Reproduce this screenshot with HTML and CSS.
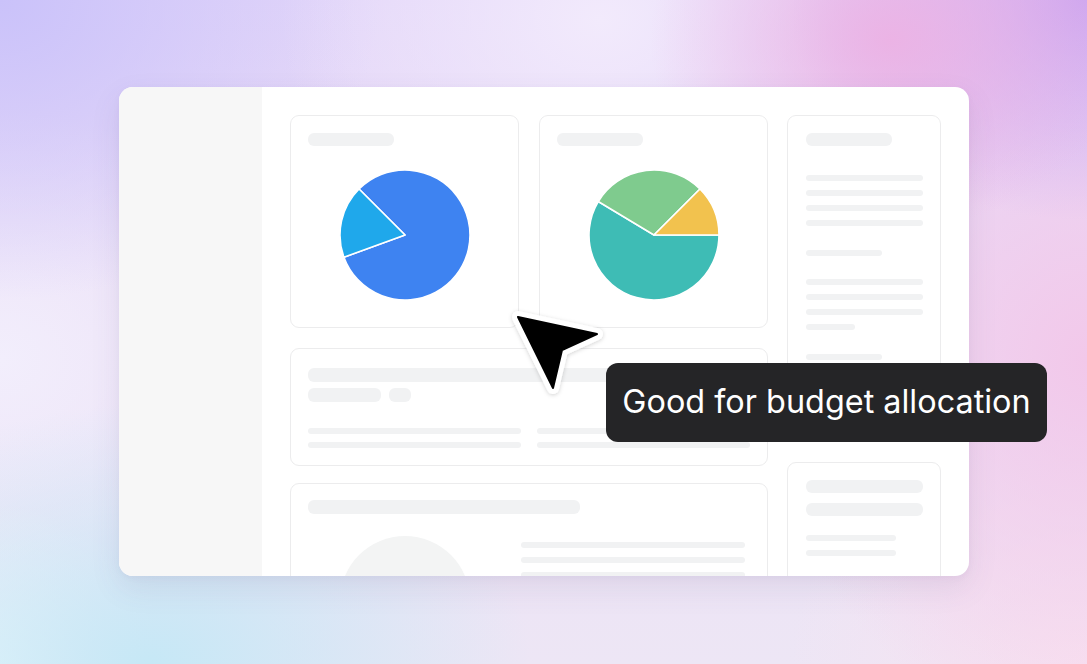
FILE: index.html
```html
<!DOCTYPE html>
<html lang="en">
<head>
<meta charset="utf-8">
<title>Pie chart</title>
<link rel="stylesheet" href="styles.css">
</head>
<body>
<div class="stage">
  <div class="window">
    <aside class="sidebar"></aside>
    <main class="main">
      <div class="left">
        <div class="row">
          <section class="card chart-card">
            <div class="bar title"></div>
            <svg class="pie" viewBox="-66 -66 132 132" width="132" height="132">
              <path d="M0,0 L-45.96,-45.96 A65,65 0 1 1 -61.08,22.23 Z" fill="#3e83f1" stroke="#fff" stroke-width="1.6" stroke-linejoin="round"/>
              <path d="M0,0 L-61.08,22.23 A65,65 0 0 1 -45.96,-45.96 Z" fill="#1fa8eb" stroke="#fff" stroke-width="1.6" stroke-linejoin="round"/>
            </svg>
          </section>
          <section class="card chart-card">
            <div class="bar title"></div>
            <svg class="pie" viewBox="-66 -66 132 132" width="132" height="132">
              <path d="M0,0 L65,0 A65,65 0 1 1 -55.72,-33.48 Z" fill="#3ebcb5" stroke="#fff" stroke-width="1.6" stroke-linejoin="round"/>
              <path d="M0,0 L-55.72,-33.48 A65,65 0 0 1 45.96,-45.96 Z" fill="#7fcb8e" stroke="#fff" stroke-width="1.6" stroke-linejoin="round"/>
              <path d="M0,0 L45.96,-45.96 A65,65 0 0 1 65,0 Z" fill="#f2c24e" stroke="#fff" stroke-width="1.6" stroke-linejoin="round"/>
            </svg>
          </section>
        </div>
        <section class="card wide-card">
          <div class="bar full"></div>
          <div class="chips">
            <div class="bar chip-a"></div>
            <div class="bar chip-b"></div>
          </div>
          <div class="cols">
            <div class="col">
              <div class="line"></div>
              <div class="line"></div>
            </div>
            <div class="col">
              <div class="line"></div>
              <div class="line"></div>
            </div>
          </div>
        </section>
        <section class="card detail-card">
          <div class="bar detail-title"></div>
          <div class="detail-body">
            <div class="circle"></div>
            <div class="detail-lines">
              <div class="line"></div>
              <div class="line"></div>
              <div class="line"></div>
            </div>
          </div>
        </section>
      </div>
      <div class="right">
        <section class="card side-card">
          <div class="bar title"></div>
          <div class="group g1">
            <div class="line"></div>
            <div class="line"></div>
            <div class="line"></div>
            <div class="line"></div>
          </div>
          <div class="line short"></div>
          <div class="group g2">
            <div class="line"></div>
            <div class="line"></div>
            <div class="line"></div>
            <div class="line tiny"></div>
          </div>
          <div class="line short s2"></div>
          <div class="group g3">
            <div class="line"></div>
            <div class="line"></div>
          </div>
        </section>
        <section class="card side-card2">
          <div class="bar big"></div>
          <div class="bar big"></div>
          <div class="group g4">
            <div class="line mid"></div>
            <div class="line mid"></div>
          </div>
        </section>
      </div>
    </main>
  </div>
  <svg class="cursor" width="110" height="100" viewBox="0 0 110 100">
    <defs>
      <filter id="sh" x="-30%" y="-30%" width="160%" height="160%">
        <feDropShadow dx="0" dy="1" stdDeviation="2" flood-color="#000" flood-opacity="0.18"/>
      </filter>
    </defs>
    <path d="M18,17 L97,34 L62,50 L53,88 Z" fill="#fff" stroke="#fff" stroke-width="12" stroke-linejoin="round" filter="url(#sh)"/>
    <path d="M18,17 L97,34 L62,50 L53,88 Z" fill="#000" stroke="#000" stroke-width="2" stroke-linejoin="round"/>
  </svg>
  <div class="tooltip">Good for budget allocation</div>
</div>
</body>
</html>
```

FILE: styles.css
```css
* { box-sizing: border-box; }

html, body {
  margin: 0;
  width: 1087px;
  height: 664px;
  overflow: hidden;
}

body {
  font-family: Inter, "Noto Sans", "Liberation Sans", sans-serif;
  background:
    radial-gradient(ellipse 240px 190px at 890px 40px, rgba(236, 178, 228, 0.95), rgba(236, 178, 228, 0) 100%),
    radial-gradient(ellipse 300px 220px at 1087px 0px, rgba(204, 166, 240, 1), rgba(204, 166, 240, 0) 100%),
    radial-gradient(ellipse 320px 260px at 600px 20px, rgba(242, 234, 252, 1), rgba(242, 234, 252, 0) 100%),
    radial-gradient(ellipse 380px 300px at 0px 0px, rgba(202, 194, 250, 1), rgba(202, 194, 250, 0) 100%),
    radial-gradient(ellipse 380px 260px at 150px 664px, rgba(198, 232, 246, 1), rgba(198, 232, 246, 0) 100%),
    radial-gradient(ellipse 160px 160px at 0px 664px, rgba(238, 248, 252, 1), rgba(238, 248, 252, 0) 100%),
    radial-gradient(ellipse 320px 380px at 1087px 360px, rgba(242, 200, 234, 1), rgba(242, 200, 234, 0) 100%),
    radial-gradient(ellipse 300px 250px at 1087px 664px, rgba(248, 226, 240, 1), rgba(248, 226, 240, 0) 100%),
    radial-gradient(ellipse 300px 250px at 0px 360px, rgba(242, 238, 252, 1), rgba(242, 238, 252, 0) 100%),
    linear-gradient(180deg, #e3d6f9 0%, #ecdff6 50%, #ede6f5 100%);
}

.stage {
  position: relative;
  width: 1087px;
  height: 664px;
  padding: 87px 0 0 119px;
}

.window {
  width: 850px;
  height: 489px;
  display: flex;
  background: #fff;
  border-radius: 14px;
  overflow: hidden;
  box-shadow: 0 12px 30px rgba(90, 80, 130, 0.10), 0 2px 6px rgba(90, 80, 130, 0.05);
}

.sidebar {
  width: 143px;
  flex: none;
  background: #f7f7f7;
}

.main {
  flex: 1;
  display: flex;
  gap: 19px;
  padding: 28px 0 0 28px;
}

.left {
  width: 478px;
  flex: none;
  display: flex;
  flex-direction: column;
}

.row {
  display: flex;
  gap: 20px;
}

.right {
  width: 154px;
  flex: none;
  display: flex;
  flex-direction: column;
  gap: 20px;
}

.card {
  border: 1px solid #ececed;
  border-radius: 9px;
  background: #fff;
  flex: none;
}

.bar {
  background: #f1f2f3;
  border-radius: 6px;
  height: 13px;
}

.line {
  background: #f1f2f3;
  border-radius: 3px;
  height: 6px;
}

/* chart cards */
.chart-card {
  width: 229px;
  height: 213px;
  padding: 17px 0 0 17px;
  display: flex;
  flex-direction: column;
}

.title { width: 86px; }

.pie {
  display: block;
  margin: 23px 0 0 31px;
}

/* wide card */
.wide-card {
  margin-top: 20px;
  height: 118px;
  padding: 19px 17px 0 17px;
}

.full { width: 442px; height: 14px; }

.chips {
  display: flex;
  gap: 8px;
  margin-top: 6px;
}

.chip-a { width: 73px; height: 14px; }
.chip-b { width: 22px; height: 14px; }

.cols {
  display: flex;
  gap: 16px;
  margin-top: 26px;
}

.col {
  width: 213px;
  display: flex;
  flex-direction: column;
  gap: 8px;
}

/* detail card */
.detail-card {
  margin-top: 17px;
  height: 140px;
  padding: 16px 17px 0 17px;
}

.detail-title { width: 272px; height: 14px; }

.detail-body {
  display: flex;
  margin-top: 22px;
}

.circle {
  width: 130px;
  height: 130px;
  border-radius: 50%;
  background: #f3f4f4;
  margin-left: 32px;
  flex: none;
}

.detail-lines {
  margin-left: 51px;
  margin-top: 6px;
  width: 224px;
  display: flex;
  flex-direction: column;
  gap: 9px;
}

/* right column */
.side-card {
  width: 154px;
  height: 327px;
  padding: 17px 0 0 18px;
}

.side-card .line { width: 117px; }

.group {
  display: flex;
  flex-direction: column;
  gap: 9px;
}

.g1 { margin-top: 29px; }
.side-card .line.short { width: 76px; margin-top: 24px; }
.g2 { margin-top: 23px; }
.side-card .line.tiny { width: 49px; }
.side-card .line.s2 { margin-top: 24px; }
.g3 { margin-top: 23px; }

.side-card2 {
  width: 154px;
  height: 140px;
  padding: 17px 0 0 18px;
  display: flex;
  flex-direction: column;
  gap: 10px;
}

.big { width: 117px; }

.g4 { margin-top: 9px; }
.side-card2 .line.mid { width: 90px; }

/* overlays */
.cursor {
  position: absolute;
  left: 500px;
  top: 300px;
}

.tooltip {
  position: absolute;
  left: 606px;
  top: 363px;
  width: 441px;
  height: 79px;
  background: #252527;
  color: #fff;
  border-radius: 12px;
  font-size: 32.4px;
  font-weight: 400;
  letter-spacing: 0;
  display: flex;
  align-items: center;
  justify-content: center;
  padding-bottom: 2px;
}
```
